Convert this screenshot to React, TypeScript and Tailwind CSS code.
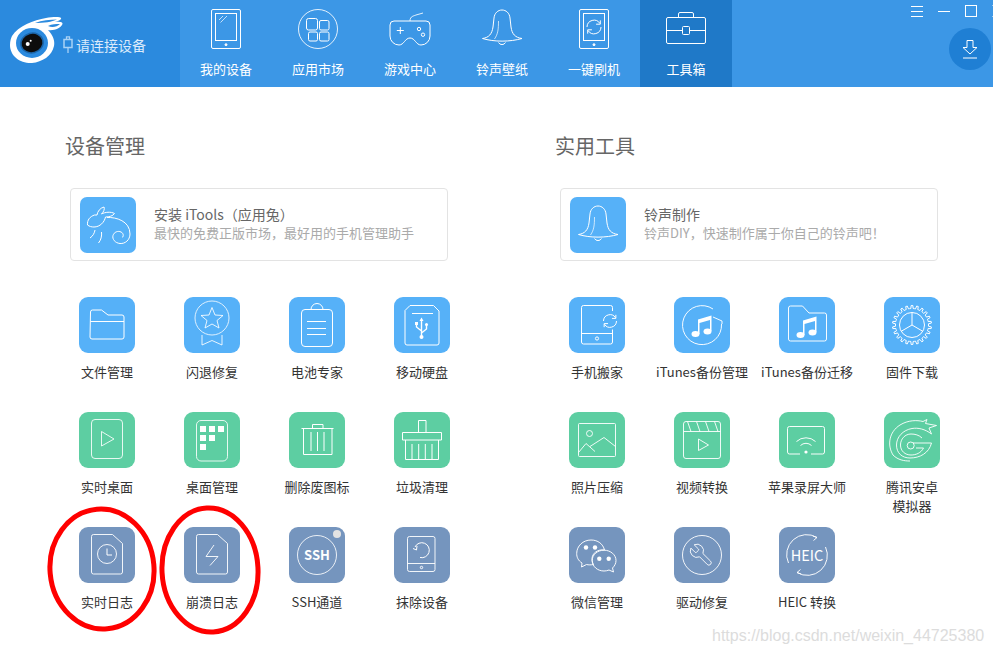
import React from 'react';

const gearPath = (() => {
    let d = '';
    const teeth = 22;
    for (let i = 0; i < teeth; i++) {
        const a = (i / teeth) * Math.PI * 2;
        const step = (Math.PI * 2) / teeth;
        const pts: [number, number][] = [
            [16.5, a],
            [16.5, a + step * 0.25],
            [19.5, a + step * 0.35],
            [19.5, a + step * 0.65],
            [16.5, a + step * 0.75],
        ];
        pts.forEach(([r, t], j) => {
            const x = (28 + r * Math.cos(t)).toFixed(2);
            const y = (28 + r * Math.sin(t)).toFixed(2);
            d += `${i === 0 && j === 0 ? 'M' : 'L'}${x} ${y} `;
        });
    }
    return d + 'Z';
})();

const Ico = ({ children }: { children: React.ReactNode }) => (
    <svg viewBox="0 0 56 56" width="56" height="56" className="block fill-none stroke-white">
        {children}
    </svg>
);

const Notes = () => (
    <g className="fill-white" stroke="none">
        <path d="M24 22.5 L37.5 18.5 V34 H36 V23 L25.5 26 V37 H24 Z" />
        <ellipse cx="21.5" cy="37" rx="4" ry="3" />
        <ellipse cx="33.5" cy="34.5" rx="4" ry="3" />
    </g>
);

const BellShape = () => (
    <>
        <path d="M8.5 37.5 C15 36.5 18 33 19 26 L20 17 C20.5 12 24 9 28 9 C32 9 35.5 12 36 17 L37 26 C38 33 41 36.5 48 37.5 C36 41 20 41 8.5 37.5 Z" />
        <path d="M24.5 20 C24.5 28 24 33 20.5 38" strokeOpacity=".7" />
        <path d="M24.5 41.5 a4 4 0 0 0 7 0" />
    </>
);

const Sync = ({ x, y, r }: { x: number; y: number; r: number }) => (
    <g transform={`translate(${x} ${y})`}>
        <path d={`M${-r} 0 A${r} ${r} 0 0 1 ${r * 0.85} ${-r * 0.5}`} />
        <path d={`M${r} 0 A${r} ${r} 0 0 1 ${-r * 0.85} ${r * 0.5}`} />
        <path d={`M${r * 0.9} ${-r * 0.95} V${-r * 0.4} H${r * 0.3}`} />
        <path d={`M${-r * 0.9} ${r * 0.95} V${r * 0.4} H${-r * 0.3}`} />
    </g>
);

const icons: Record<string, React.ReactNode> = {
    rabbit: (
        <Ico>
            <path d="M7.5 28 C7 23 10 19.5 14.5 18 L17 18 C17.5 14.5 20 11 24 10 C25 12 23.5 15 21.5 17 C25 15 31 14.5 34.5 16.5 C33 19 29 20 25.5 20 C24.5 25 20 30 14 30 C11.5 30 9.5 29.5 7.5 28 Z" />
            <path d="M27 20.5 C36 20 50 24 50 37 C50 43 45 47 40 46.5 C35 46 32 42 33 38.5 C34 35 38 33.5 41 35 C43.5 36 44 39.5 42 40.5" />
            <path d="M15 33 C14.5 36 13 39 10 41" />
            <path d="M21.5 35 C22 39 21 43 18.5 46" />
        </Ico>
    ),
    bell: (
        <Ico>
            <BellShape />
        </Ico>
    ),
    folder: (
        <Ico>
            <path d="M11.5 15 a2 2 0 0 1 2-2 h9 l6.5 5 h14 a2 2 0 0 1 2 2 v20 a2 2 0 0 1-2 2 h-30 a2 2 0 0 1-2-2 z M11.5 24.5 h33.5" />
        </Ico>
    ),
    badge: (
        <Ico>
            <circle cx="28" cy="21" r="17" strokeOpacity=".8" />
            <path d="M28 10.5 L31 18 L39 18.5 L33 23.5 L35 31 L28 27 L21 31 L23 23.5 L17 18.5 L25 18 Z" strokeOpacity=".85" />
            <path d="M18 38 V48 L28 43.5 L38 48 V38" strokeOpacity=".85" />
        </Ico>
    ),
    battery: (
        <Ico>
            <rect x="12.5" y="12.5" width="31" height="37" rx="3.5" />
            <path d="M22 12.5 a6 6 0 0 1 12 0" />
            <path d="M18 24.5 h19 M18 31.5 h19 M18 37.5 h19" />
        </Ico>
    ),
    disk: (
        <Ico>
            <path d="M16 8.5 H39.5 L45 14 V46 a2 2 0 0 1-2 2 H13 a2 2 0 0 1-2-2 V13.5 Z" />
            <path d="M18 16.5 h21" />
            <path d="M27.5 23 V40 M27.5 34 L22.5 30 V27 M27.5 36 L32.5 32 V28" strokeWidth="1.4" />
            <circle cx="27.5" cy="40" r="2" className="fill-white" stroke="none" />
            <path d="M27.5 20.5 L25.5 24 H29.5 Z" className="fill-white" stroke="none" />
            <rect x="21" y="25" width="3" height="3" className="fill-white" stroke="none" />
            <circle cx="32.5" cy="27.5" r="1.5" className="fill-white" stroke="none" />
        </Ico>
    ),
    play: (
        <Ico>
            <rect x="12.5" y="7.5" width="31" height="39" rx="3.5" strokeOpacity=".85" />
            <path d="M22.5 19.5 L35 27 L22.5 34 Z" strokeOpacity=".85" />
        </Ico>
    ),
    desktop: (
        <Ico>
            <rect x="12.5" y="8.5" width="31" height="40.5" rx="4.5" strokeOpacity=".85" />
            <g className="fill-white" stroke="none">
                <rect x="16" y="14" width="6" height="6" />
                <rect x="25" y="14" width="6" height="6" />
                <rect x="34" y="14" width="6" height="6" />
                <rect x="16" y="23" width="6" height="6" />
                <rect x="25" y="23" width="6" height="6" />
                <rect x="16" y="32" width="6" height="6" />
            </g>
        </Ico>
    ),
    trash: (
        <Ico>
            <path d="M12.5 16.5 h32 M23.5 16.5 v-4 h10.5 v4 M14.5 16.5 v26 h28.5 v-26 M22 20 v19 M28.5 20 v19 M35 20 v19" />
        </Ico>
    ),
    broom: (
        <Ico>
            <path d="M24.5 20.5 v-12 h7.5 v12 M8.5 20.5 h39 v7.5 h-39 z M11.5 28 v19.5 h33 v-19.5 M18 32 v15.5 M24.7 32 v15.5 M31.3 32 v15.5 M38 32 v15.5" />
        </Ico>
    ),
    clockDoc: (
        <Ico>
            <path d="M14.5 7.5 H33.5 L43.5 16.5 V45 a2 2 0 0 1-2 2 H14.5 a2 2 0 0 1-2-2 V9.5 a2 2 0 0 1 2-2 Z" strokeOpacity=".9" />
            <circle cx="28" cy="27" r="9.5" strokeOpacity=".9" />
            <path d="M28 21.5 V28 H33" />
        </Ico>
    ),
    boltDoc: (
        <Ico>
            <path d="M14.5 7.5 H33.5 L43.5 16.5 V45 a2 2 0 0 1-2 2 H14.5 a2 2 0 0 1-2-2 V9.5 a2 2 0 0 1 2-2 Z" strokeOpacity=".9" />
            <path d="M30 18 L22 29.5 H34 L26 38.5" strokeOpacity=".9" />
        </Ico>
    ),
    ssh: (
        <Ico>
            <circle cx="28" cy="28" r="19.5" strokeOpacity=".85" />
            <circle cx="48" cy="7" r="4" className="fill-[#e3e3e3]" stroke="none" />
            <text x="28" y="32.5" textAnchor="middle" stroke="none" className="fill-white text-[13px] font-bold">
                SSH
            </text>
        </Ico>
    ),
    erase: (
        <Ico>
            <rect x="13.5" y="9.5" width="27.5" height="35" rx="2" strokeOpacity=".9" />
            <path d="M13.5 36.5 h27.5" strokeOpacity=".9" />
            <circle cx="27.5" cy="40.5" r="1.2" />
            <path d="M21 20 A7.5 7.5 0 1 1 26 30.5" />
            <path d="M19 21.5 L22.5 23 L23 19" />
        </Ico>
    ),
    tabletSync: (
        <Ico>
            <path d="M43.5 14 V10.5 a2 2 0 0 0-2-2 H14.5 a2 2 0 0 0-2 2 V45 a2 2 0 0 0 2 2 H41.5 a2 2 0 0 0 2-2 V32.5 M12.5 36.5 H43.5" />
            <circle cx="28" cy="41.5" r="1.6" />
            <Sync x={41} y={24} r={6.5} />
        </Ico>
    ),
    itunes: (
        <Ico>
            <path d="M47.5 27 A19.5 19.5 0 1 1 39 12 M39 20 L48 24 M48 24 V27" strokeOpacity=".95" />
            <Notes />
        </Ico>
    ),
    musicFolder: (
        <Ico>
            <path d="M9.5 11 a2 2 0 0 1 2-2 h12 l6.5 7 h15.5 a2 2 0 0 1 2 2 v24 a2 2 0 0 1-2 2 h-34 a2 2 0 0 1-2-2 z" strokeOpacity=".95" />
            <g transform="translate(0 1)">
                <Notes />
            </g>
        </Ico>
    ),
    gear: (
        <Ico>
            <path d={gearPath} />
            <circle cx="28" cy="28" r="12.5" />
            <path d="M28 15.5 V28 M28 28 L17.2 34.3 M28 28 L38.8 34.3" />
        </Ico>
    ),
    photo: (
        <Ico>
            <rect x="9.5" y="11.5" width="37" height="33" rx="1" strokeOpacity=".9" />
            <circle cx="20.5" cy="21.5" r="3" strokeOpacity=".9" />
            <path d="M9.5 40.5 L17 31.5 L26 39.5 M21 34.5 L35 25.5 L46.5 34.5" strokeOpacity=".9" />
        </Ico>
    ),
    video: (
        <Ico>
            <rect x="9.5" y="9.5" width="37" height="37" rx="2.5" strokeOpacity=".9" />
            <path d="M9.5 19.5 H46.5 M13.5 9.5 L17 19.5 M22.5 9.5 L26 19.5 M31.5 9.5 L35 19.5 M40.5 9.5 L44 19.5" strokeOpacity=".9" />
            <path d="M24.5 27 L34.5 33 L24.5 38.5 Z" strokeOpacity=".9" />
        </Ico>
    ),
    airplay: (
        <Ico>
            <path d="M21 42 H10.5 a2 2 0 0 1-2-2 V16.5 a2 2 0 0 1 2-2 H43.5 a2 2 0 0 1 2 2 V40 a2 2 0 0 1-2 2 H32" strokeOpacity=".95" />
            <circle cx="27" cy="40" r="1.6" className="fill-white" stroke="none" />
            <path d="M21.5 33.5 a8 8 0 0 1 11 0 M17.5 29.5 a14 14 0 0 1 19 0" strokeOpacity=".95" />
        </Ico>
    ),
    tencent: (
        <Ico>
            <path d="M9 43 C3 33 5 20 16 13 C24 8 33 8 39 9.5 L43 7.5 L41.5 11.5 L52.5 13.5 L45 16 L47.5 22 C41 17 34 15.5 28 16.5 C19 18 12.5 25 12.5 33 C12.5 41 18 46 26 46 C36 46 45 41 47.5 31 H29" strokeOpacity=".9" />
            <path d="M9 43 C14 48 20 49 26 49" strokeOpacity=".9" />
            <path d="M38 26 C35 23 31 22 27 22 C21 22 16.5 27 16.5 33 C16.5 39 21 43 27 43 C32 43 37 41 39.5 36 H32" strokeOpacity=".9" />
            <circle cx="26.7" cy="33.5" r="3.5" strokeOpacity=".9" />
        </Ico>
    ),
    wechat: (
        <Ico>
            <path d="M13 36 C9 33.5 7.7 30 7.7 26.5 C7.7 19 14 13 22 13 C29 13 34 17 35.5 23 C29 22 23 26 23 32 C23 34 23.5 36 24.5 37.5 C22 38 19.5 38 17.5 37.5 L12.5 40 Z" strokeOpacity=".95" />
            <path d="M35 23.2 C41.5 23.2 47 27.7 47 33.5 C47 36.5 45.5 39 43.5 41 L44.5 45 L40 43 C38.5 43.7 36.7 44 35 44 C28.5 44 23.2 39.5 23.2 33.5 C23.2 27.7 28.5 23.2 35 23.2 Z" strokeOpacity=".95" />
            <g className="fill-white" stroke="none">
                <circle cx="17" cy="20.5" r="2.2" />
                <circle cx="26" cy="20.5" r="2.2" />
                <circle cx="30.3" cy="31.7" r="2.2" />
                <circle cx="39.7" cy="31.7" r="2.2" />
            </g>
        </Ico>
    ),
    wrench: (
        <Ico>
            <circle cx="28" cy="28" r="19.5" strokeOpacity=".9" />
            <g transform="translate(40.5 15) scale(-1.1 1.1)" strokeWidth=".9" strokeOpacity=".9">
                <path d="M14.7 6.3a1 1 0 0 0 0 1.4l1.6 1.6a1 1 0 0 0 1.4 0l3.77-3.77a6 6 0 0 1-7.94 7.94l-6.91 6.91a2.12 2.12 0 0 1-3-3l6.91-6.91a6 6 0 0 1 7.94-7.94l-3.76 3.76z" />
            </g>
        </Ico>
    ),
    heic: (
        <Ico>
            <path d="M9.5 36 A20 20 0 0 1 38 10.5 M38 10.5 L34 9 M38 10.5 L34.5 13.5" strokeOpacity=".95" />
            <path d="M46.5 20 A20 20 0 0 1 18 45.5 M18 45.5 L22 47 M18 45.5 L21.5 42.5" strokeOpacity=".95" />
            <text x="28" y="33.5" textAnchor="middle" stroke="none" className="fill-white text-[14.5px]">
                HEIC
            </text>
        </Ico>
    ),
};

const BLUE = 'bg-[#56b1f8]';
const GREEN = 'bg-[#5dcea2]';
const SLATE = 'bg-[#7595be]';

interface Tool {
    label: string;
    icon: string;
    bg: string;
}

const leftTools: Tool[] = [
    { label: '文件管理', icon: 'folder', bg: BLUE },
    { label: '闪退修复', icon: 'badge', bg: BLUE },
    { label: '电池专家', icon: 'battery', bg: BLUE },
    { label: '移动硬盘', icon: 'disk', bg: BLUE },
    { label: '实时桌面', icon: 'play', bg: GREEN },
    { label: '桌面管理', icon: 'desktop', bg: GREEN },
    { label: '删除废图标', icon: 'trash', bg: GREEN },
    { label: '垃圾清理', icon: 'broom', bg: GREEN },
    { label: '实时日志', icon: 'clockDoc', bg: SLATE },
    { label: '崩溃日志', icon: 'boltDoc', bg: SLATE },
    { label: 'SSH通道', icon: 'ssh', bg: SLATE },
    { label: '抹除设备', icon: 'erase', bg: SLATE },
];

const rightTools: Tool[] = [
    { label: '手机搬家', icon: 'tabletSync', bg: BLUE },
    { label: 'iTunes备份管理', icon: 'itunes', bg: BLUE },
    { label: 'iTunes备份迁移', icon: 'musicFolder', bg: BLUE },
    { label: '固件下载', icon: 'gear', bg: BLUE },
    { label: '照片压缩', icon: 'photo', bg: GREEN },
    { label: '视频转换', icon: 'video', bg: GREEN },
    { label: '苹果录屏大师', icon: 'airplay', bg: GREEN },
    { label: '腾讯安卓\n模拟器', icon: 'tencent', bg: GREEN },
    { label: '微信管理', icon: 'wechat', bg: SLATE },
    { label: '驱动修复', icon: 'wrench', bg: SLATE },
    { label: 'HEIC 转换', icon: 'heic', bg: SLATE },
];

const ToolGrid = ({ tools }: { tools: Tool[] }) => (
    <div className="mt-9 -ml-[11px] grid grid-cols-[repeat(4,104px)] auto-rows-[115px] gap-x-px">
        {tools.map(t => (
            <div key={t.label} className="flex flex-col items-center">
                <div className={`w-14 h-14 rounded-[9px] overflow-hidden ${t.bg}`}>{icons[t.icon]}</div>
                <span className="mt-[9px] text-[13px] leading-[19px] text-[#333] text-center whitespace-pre-line">
                    {t.label}
                </span>
            </div>
        ))}
    </div>
);

const FeatureCard = ({ icon, title, desc }: { icon: string; title: string; desc: string }) => (
    <div className="mt-7 ml-1 w-[378px] h-[73px] rounded border border-[#e3e3e3] flex items-center pl-[9px] bg-white">
        <div className={`w-14 h-14 rounded-[7px] overflow-hidden ${BLUE}`}>{icons[icon]}</div>
        <div className="ml-[18px] pb-[3px]">
            <div className="text-sm leading-[19px] text-[#666]">{title}</div>
            <div className="text-[13px] leading-[18px] text-[#aaa]">{desc}</div>
        </div>
    </div>
);

const Nav = ({ children }: { children: React.ReactNode }) => (
    <svg viewBox="0 0 60 48" width="60" height="48" className="block fill-none stroke-white">
        {children}
    </svg>
);

const tabs: { label: string; active?: boolean; icon: React.ReactNode }[] = [
    {
        label: '我的设备',
        icon: (
            <Nav>
                <rect x="15.5" y="4.5" width="29" height="39" rx="1.5" />
                <rect x="19.5" y="8.5" width="21" height="27" />
                <circle cx="30" cy="39.7" r="1" className="fill-white" />
                <path d="M23 15 l4 -4 M24.5 17.5 l6.5 -6.5" strokeOpacity=".7" />
            </Nav>
        ),
    },
    {
        label: '应用市场',
        icon: (
            <Nav>
                <circle cx="30" cy="24" r="19.5" strokeOpacity=".85" />
                <rect x="18.5" y="13.5" width="11" height="11.5" rx="2" />
                <rect x="31.5" y="15.5" width="9.5" height="9.5" rx="1.5" />
                <rect x="20.5" y="27" width="9" height="9" rx="1.5" />
                <rect x="31.5" y="27" width="9.5" height="9" rx="1.5" />
            </Nav>
        ),
    },
    {
        label: '游戏中心',
        icon: (
            <Nav>
                <path d="M14 16 H46 a4 4 0 0 1 4 4 V31 a9 9 0 0 1 -9 9 C36 40 35 33 30 33 C25 33 24 40 19 40 a9 9 0 0 1 -9 -9 V20 a4 4 0 0 1 4 -4 Z" />
                <path d="M30 16 C30 11 34 11 36 10 L43 8" strokeOpacity=".85" />
                <path d="M20.3 22 v7 M16.8 25.5 h7" />
                <circle cx="39" cy="24" r="1.7" />
                <circle cx="43" cy="29.7" r="1.7" />
            </Nav>
        ),
    },
    {
        label: '铃声壁纸',
        icon: (
            <Nav>
                <g transform="translate(2 -4)">
                    <BellShape />
                </g>
            </Nav>
        ),
    },
    {
        label: '一键刷机',
        icon: (
            <Nav>
                <rect x="15.5" y="4.5" width="29" height="39" rx="1.5" />
                <rect x="19.5" y="8.5" width="21" height="27" />
                <circle cx="30" cy="39.7" r="1" className="fill-white" />
                <Sync x={30} y={22} r={7} />
            </Nav>
        ),
    },
    {
        label: '工具箱',
        active: true,
        icon: (
            <Nav>
                <rect x="10.5" y="12.5" width="39" height="26" rx="1.5" />
                <path d="M22.5 12.5 V9 a1.5 1.5 0 0 1 1.5 -1.5 H36 a1.5 1.5 0 0 1 1.5 1.5 V12.5" />
                <path d="M10.5 25.5 H26.5 M33.5 25.5 H49.5" />
                <rect x="26.5" y="21.5" width="7" height="8" rx="1" />
            </Nav>
        ),
    },
];

const App = () => {
    return (
        <div className="relative w-[993px] h-[654px] overflow-hidden bg-white font-['Noto_Sans_CJK_SC',sans-serif]">
            {/* Header */}
            <div className="flex h-[87px] bg-[#3c97e6]">
                <div className="w-[180px] bg-[#2b8ade] flex items-start">
                    <svg viewBox="0 0 64 64" width="64" height="64" className="ml-[8px] mt-[14px] block shrink-0">
                        <path d="M4 22 C10 12 26 6 38 4 C44 3 52 2.5 53 4 C54 5.5 50 7 47 8 C51 7.5 55 8 54.5 10 C53 14 46 17 40 16 C45 21 47 27 46 32 C44 42 34 48 24 49 C12 49.5 2 42 2 31 C2 27 3 24 4 22 Z" fill="#fff" />
                        <path d="M27 9 C34 6 42 5.5 49 5.5 C44 8 36 9 27 9 Z M40 12 C44 10 48 10 52 10 C49 13 44 14 40 12 Z" fill="#2b8ade" />
                        <ellipse cx="24" cy="29" rx="16" ry="15" fill="#2b8ade" />
                        <ellipse cx="24" cy="29" rx="12" ry="10.5" fill="#1c65a8" transform="rotate(-15 24 29)" />
                        <ellipse cx="24" cy="29" rx="10.5" ry="9" fill="#0d0d0d" transform="rotate(-15 24 29)" />
                        <circle cx="19.7" cy="30" r="2" fill="#fff" />
                        <circle cx="22.7" cy="26.7" r="1" fill="#fff" />
                    </svg>
                    <svg viewBox="0 0 10 17" width="10" height="17" className="mt-9 -ml-[9px] block shrink-0 fill-none stroke-[#a9d2f5]">
                        <rect x="1" y="3.5" width="8" height="8" strokeWidth="1.5" />
                        <path d="M3.5 3 V0.8 H6.5 V3 M5 12 V17" strokeWidth="1.3" />
                    </svg>
                    <span className="ml-[3px] mt-[35px] text-sm leading-5 text-[#dbeafb] whitespace-nowrap">请连接设备</span>
                </div>

                {tabs.map(tab => (
                    <div
                        key={tab.label}
                        className={`w-[92px] flex flex-col items-center pt-[5px] ${tab.active ? 'bg-[#1f79c8]' : ''}`}
                    >
                        {tab.icon}
                        <span className="mt-[6px] text-[13px] leading-5 text-white">{tab.label}</span>
                    </div>
                ))}

                <div className="flex-1 flex flex-col items-end">
                    <div className="flex items-start -mr-[11px] pt-[5px] gap-[15px]">
                        <svg width="12" height="12" viewBox="0 0 12 12" className="block stroke-white">
                            <path d="M0 1.5 H12 M0 6.5 H12 M0 11.5 H12" />
                        </svg>
                        <svg width="12" height="12" viewBox="0 0 12 12" className="block stroke-white">
                            <path d="M0 6.5 H12" />
                        </svg>
                        <svg width="12" height="12" viewBox="0 0 12 12" className="block fill-none stroke-white">
                            <rect x="0.5" y="0.5" width="11" height="11" />
                        </svg>
                        <svg width="12" height="12" viewBox="0 0 12 12" className="block stroke-white">
                            <path d="M0.5 0.5 L11.5 11.5 M11.5 0.5 L0.5 11.5" />
                        </svg>
                    </div>
                    <div className="mt-[11px] mr-0.5 w-[42px] h-[42px] rounded-full bg-[#1f7fd4] flex items-center justify-center">
                        <svg width="16" height="20" viewBox="0 0 16 20" className="block fill-none stroke-white">
                            <path d="M5 1.5 H11 V8.5 H15 L8 15 L1 8.5 H5 Z M1 19 H15" />
                        </svg>
                    </div>
                </div>
            </div>

            {/* Body */}
            <div className="flex pt-[45px]">
                <div className="w-[556px] pl-[66px]">
                    <h2 className="-ml-px text-xl leading-7 text-[#666]">设备管理</h2>
                    <FeatureCard icon="rabbit" title="安装 iTools（应用兔）" desc="最快的免费正版市场，最好用的手机管理助手" />
                    <ToolGrid tools={leftTools} />
                </div>
                <div className="flex-1">
                    <h2 className="-ml-px text-xl leading-7 text-[#666]">实用工具</h2>
                    <FeatureCard icon="bell" title="铃声制作" desc="铃声DIY，快速制作属于你自己的铃声吧！" />
                    <ToolGrid tools={rightTools} />
                </div>
            </div>

            {/* Hand drawn annotation circles */}
            <svg viewBox="0 0 993 654" width="993" height="654" className="absolute inset-0 block pointer-events-none fill-none stroke-[#f00]">
                <ellipse cx="102" cy="569" rx="52" ry="60" strokeWidth="5" transform="rotate(-5 102 569)" />
                <ellipse cx="210" cy="570" rx="48" ry="62" strokeWidth="5" transform="rotate(-3 210 570)" />
            </svg>

            {/* Blog watermark */}
            <span className="absolute left-[712px] top-[625px] font-['Liberation_Sans',sans-serif] text-base leading-[22px] text-[#dcdcdc] whitespace-nowrap">
                https://blog.csdn.net/weixin_44725380
            </span>
        </div>
    );
};

export default App;
